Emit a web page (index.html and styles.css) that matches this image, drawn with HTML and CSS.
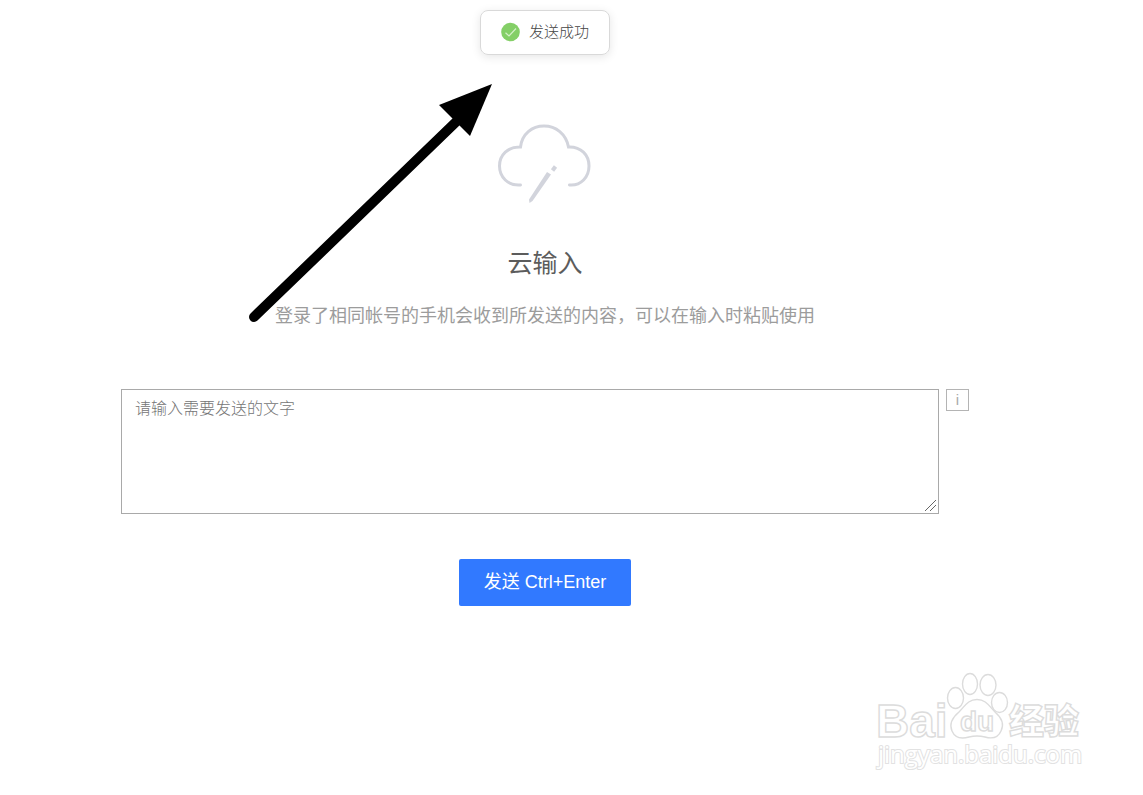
FILE: index.html
```html
<!DOCTYPE html>
<html lang="zh-CN">
<head>
<meta charset="utf-8">
<title>云输入</title>
<link rel="stylesheet" href="styles.css">
</head>
<body>
<div class="page">
  <div class="toast" role="status">
    <svg class="toast-icon" viewBox="0 0 20 20" aria-hidden="true">
      <circle cx="9.500" cy="10" r="9.3" fill="#84cf67"/>
      <path d="M4.500 10.800 8 14 15 6.500" fill="none" stroke="#d5f0c9" stroke-width="1.2"/>
    </svg>
    <span>发送成功</span>
  </div>
  <main class="content">
    <svg class="cloud" viewBox="0 0 120 100" aria-hidden="true">
      <g fill="none" stroke="#d2d4dc" stroke-width="3">
        <path d="M35.500 70C23 71 14.500 62 14.500 51C14.500 40 23 31.500 35.500 32C37 19 47 11 59 11C71 11 81 19 83.500 32C96 31.500 104 40 104 51C104 62 96 71 84.500 70" stroke-linecap="round"/>
        <path d="M67.500 55.500 70.500 51.500" stroke-width="4"/>
      </g>
      <path d="M62 57 66 59.500 47.500 86 44.500 88 44 84.500Z" fill="#d2d4dc"/>
    </svg>
    <h1 class="title">云输入</h1>
    <p class="subtitle">登录了相同帐号的手机会收到所发送的内容，可以在输入时粘贴使用</p>
    <form class="form">
      <div class="field">
        <textarea class="message" aria-label="发送内容" placeholder="请输入需要发送的文字"></textarea>
        <button class="info" type="button">i</button>
      </div>
      <button class="send" type="button">发送 Ctrl+Enter</button>
    </form>
  </main>
  <svg class="arrow" viewBox="0 0 250 244" aria-hidden="true">
    <path d="M9 237 212 41" stroke="#000" stroke-width="10" stroke-linecap="round"/>
    <path d="M247 4 194 25 225 56Z"/>
  </svg>
  <svg class="watermark" viewBox="0 0 230 120" role="img" aria-label="Baidu 经验">
    <g fill="#fff" stroke="#dcdcdc" stroke-width="1.4">
      <text class="mark-brand" x="11" y="77">Bai</text>
      <ellipse cx="90.500" cy="38" rx="8" ry="10.500"/>
      <ellipse cx="105" cy="24" rx="7.500" ry="10.500"/>
      <ellipse cx="123" cy="25" rx="8" ry="10.500"/>
      <ellipse cx="134.500" cy="42.500" rx="8" ry="10"/>
      <path d="M112 39.500C121 39.500 124 46 130 52C137 58 139 65 136 71C133 78 127 79 120 77Q112 75 104 77C97 79 90 78 87 71C84 64 88 57 94 52C100 46 103 39.500 112 39.500Z"/>
      <text class="mark-du" x="95" y="71">du</text>
      <text class="mark-cn" x="144" y="74">经验</text>
      <text class="mark-url" x="13" y="103">jingyan.baidu.com</text>
    </g>
  </svg>
</div>
</body>
</html>
```
FILE: styles.css
```css
* {
  box-sizing: border-box;
}

body {
  margin: 0;
  background: #fff;
  font-family: "Liberation Sans", "Noto Sans CJK SC", sans-serif;
}

.page {
  position: relative;
  min-height: 100vh;
  padding: 10px 53px 0 0;
  display: flex;
  flex-direction: column;
  align-items: center;
}

.toast {
  display: flex;
  align-items: center;
  gap: 8px;
  padding: 9px 20px 11px;
  border: 1px solid #d9d9d9;
  border-radius: 8px;
  box-shadow: 0 2px 10px rgba(0, 0, 0, 0.1);
  color: #444;
  font-size: 15px;
  font-weight: 300;
  line-height: 23px;
}

.toast-icon {
  width: 20px;
  height: 20px;
}

.content {
  width: 100%;
  padding-top: 60px;
  display: flex;
  flex-direction: column;
  align-items: center;
}

.cloud {
  width: 120px;
  height: 100px;
}

.title {
  margin: 30px 0 0;
  color: #5c5c5c;
  font-size: 25px;
  font-weight: 400;
  line-height: 36px;
}

.subtitle {
  margin: 22px 0 0;
  color: #9c9c9c;
  font-size: 18px;
  font-weight: 400;
  line-height: 26px;
}

.form {
  width: 100%;
  max-width: 848px;
  margin-top: 60px;
  display: flex;
  flex-direction: column;
  align-items: center;
}

.field {
  width: 100%;
  display: flex;
  align-items: flex-start;
  gap: 7px;
}

.message {
  flex: 1;
  height: 125px;
  padding: 7px 13px;
  border: 1px solid #a9a9a9;
  border-radius: 0;
  outline: 0;
  background: #fff;
  color: #333;
  font-family: inherit;
  font-size: 16px;
  font-weight: 300;
  line-height: 24px;
}

.message::placeholder {
  color: #757575;
}

.message::-webkit-resizer {
  background: linear-gradient(135deg, transparent 47%, #666 47% 52%, transparent 52% 70%, #666 70% 75%, transparent 75%) center / 11px 11px no-repeat;
}

.info {
  width: 23px;
  height: 22px;
  padding: 0;
  border: 1px solid #b4b4b4;
  background: #fff;
  color: #aaa;
  font-family: inherit;
  font-size: 15px;
  line-height: 20px;
}

.send {
  margin-top: 45px;
  padding: 10px 25px;
  border: 0;
  border-radius: 2px;
  background: #3179ff;
  color: #fff;
  font-family: inherit;
  font-size: 18px;
  line-height: 27px;
}

.arrow {
  position: absolute;
  top: 80px;
  left: 245px;
  width: 250px;
  height: 244px;
}

.watermark {
  position: absolute;
  right: 48px;
  bottom: 15px;
  width: 230px;
  height: 120px;
}

.mark-brand {
  font: bold 46px "Liberation Sans", sans-serif;
}

.mark-du {
  font: bold 28px "Liberation Sans", sans-serif;
}

.mark-cn {
  font: 900 35px "Noto Sans CJK SC", sans-serif;
}

.mark-url {
  font: 24px "Open Sans", sans-serif;
  paint-order: stroke;
  stroke: #e2e2e2;
  stroke-width: 2px;
}
```
